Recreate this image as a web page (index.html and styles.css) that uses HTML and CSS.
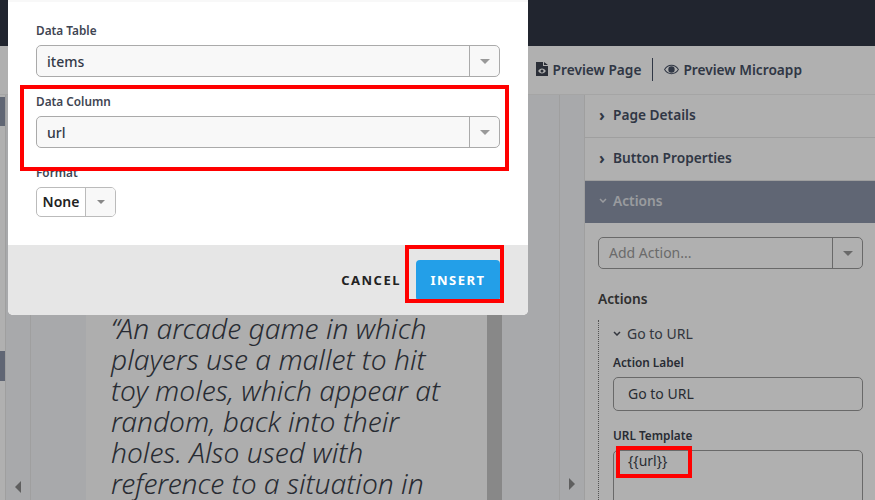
FILE: index.html
```html
<!DOCTYPE html>
<html lang="en">
<head>
  <meta charset="UTF-8">
  <title>Page Editor</title>
  <link rel="stylesheet" href="styles.css">
</head>
<body>
  <div class="app">
    <header class="topbar"></header>

    <div class="toolbar">
      <span class="toolbar-cut">m</span>
      <div class="preview-links">
        <a class="preview-link">
          <svg class="icon-file" viewBox="0 0 12 14"><path fill-rule="evenodd" d="M0 0h7v4h5v10H0zM8 0l4 3H8zM6 6.500c-1.700 0-3 1.100-3.800 2.500C3 10.400 4.300 11.500 6 11.500s3-1.100 3.800-2.500C9 7.600 7.700 6.500 6 6.500zM6 7.500a1.500 1.500 0 1 1 0 3 1.500 1.500 0 0 1 0-3z"/></svg>
          Preview Page
        </a>
        <span class="preview-sep"></span>
        <a class="preview-link">
          <svg class="icon-eye" viewBox="0 0 16 10"><path fill-rule="evenodd" d="M8 0C4.500 0 1.700 2 0 5c1.700 3 4.500 5 8 5s6.300-2 8-5c-1.700-3-4.500-5-8-5zM8 1c2.800 0 5.200 1.500 6.800 4-1.600 2.500-4 4-6.800 4S2.800 7.500 1.200 5C2.800 2.500 5.200 1 8 1zM8 1.600a3.400 3.400 0 1 0 0 6.800 3.400 3.400 0 0 0 0-6.800z"/></svg>
          Preview Microapp
        </a>
      </div>
    </div>

    <div class="workspace">
      <aside class="left-rail">
        <div class="rail-tabs">
          <span class="rail-tab"></span>
          <span class="rail-tab rail-tab-low"></span>
        </div>
        <div class="rail-strip"><span class="tri-left"></span></div>
      </aside>

      <main class="canvas">
        <div class="page-sheet">
          <p class="quote">“An arcade game in which players use a mallet to hit toy moles, which appear at random, back into their holes. Also used with reference to a situation in</p>
        </div>
        <div class="sheet-scroll"></div>
      </main>

      <div class="right-strip"><span class="tri-right"></span></div>

      <aside class="props">
        <div class="acc-row"><span class="chev">›</span>Page Details</div>
        <div class="acc-row"><span class="chev">›</span>Button Properties</div>
        <div class="acc-row acc-open"><svg class="chev-down" viewBox="0 0 8 5"><path d="M1 1l3 3 3-3"/></svg>Actions</div>

        <div class="props-body">
          <div class="add-action">
            <span class="add-text">Add Action...</span>
            <span class="add-arrow"><span class="tri-down"></span></span>
          </div>
          <h3 class="props-title">Actions</h3>
          <div class="action-item">
            <div class="action-head"><svg class="chev-down" viewBox="0 0 8 5"><path d="M1 1l3 3 3-3"/></svg>Go to URL</div>
            <label class="prop-label">Action Label</label>
            <div class="prop-input">Go to URL</div>
            <label class="prop-label">URL Template</label>
            <div class="prop-area">{{url}}</div>
          </div>
        </div>
      </aside>
    </div>
  </div>

  <div class="backdrop"></div>

  <div class="modal">
    <div class="modal-body">
      <label class="field-label">Data Table</label>
      <div class="select">
        <span class="select-value">items</span>
        <span class="select-arrow"><span class="tri-down"></span></span>
      </div>
      <label class="field-label">Data Column</label>
      <div class="select">
        <span class="select-value">url</span>
        <span class="select-arrow"><span class="tri-down"></span></span>
      </div>
      <label class="field-label">Format</label>
      <div class="mini-select">
        <span class="mini-value">None</span>
        <span class="mini-arrow"><span class="tri-down tri-small"></span></span>
      </div>
    </div>
    <div class="modal-foot">
      <button class="btn-cancel">CANCEL</button>
      <button class="btn-insert">INSERT</button>
    </div>
  </div>

  <div class="mark mark-column"></div>
  <div class="mark mark-insert"></div>
  <div class="mark mark-url"></div>
</body>
</html>
```

FILE: styles.css
```css
* {
  box-sizing: border-box;
}
html,
body {
  margin: 0;
  height: 100%;
  overflow: hidden;
}
body {
  position: relative;
  width: 875px;
  height: 500px;
  font-family: "Noto Sans", "Open Sans", sans-serif;
  color: #2f3440;
  background: #fff;
}

.app {
  display: flex;
  flex-direction: column;
  height: 500px;
}
.topbar {
  height: 46px;
  background: #303644;
}
.toolbar {
  display: flex;
  align-items: center;
  justify-content: space-between;
  height: 49px;
  padding-bottom: 2px;
  background: #fff;
  border-bottom: 1px solid #f0f0f0;
}
.toolbar-cut {
  width: 5px;
  overflow: hidden;
  margin-left: -7px;
  font-size: 14px;
  font-weight: 600;
  color: #444a58;
}
.preview-links {
  display: flex;
  align-items: center;
  margin-right: 73px;
}
.preview-link {
  display: flex;
  align-items: center;
  gap: 4px;
  font-size: 13.7px;
  font-weight: 600;
  color: #465064;
}
.preview-sep {
  width: 1px;
  height: 23px;
  margin: 0 11px 0 11px;
  background: #465064;
}
.icon-file {
  width: 12px;
  height: 14px;
  margin-right: 1px;
  fill: #3f4552;
}
.icon-eye {
  width: 15px;
  height: 11px;
  fill: #465064;
}

.workspace {
  display: flex;
  flex: 1;
  min-height: 0;
}
.left-rail {
  display: flex;
  width: 31px;
  background: #f3f5f8;
  border-right: 1px solid #e6e6e6;
}
.rail-tabs {
  display: flex;
  flex-direction: column;
  width: 6px;
  padding-top: 2px;
  background: #fff;
  border-right: 1px solid #e6e6e6;
}
.rail-tab {
  height: 29px;
  background: #8b94a8;
}
.rail-tab-low {
  margin-top: 225px;
  height: 30px;
}
.rail-strip {
  display: flex;
  flex: 1;
  align-items: flex-end;
  justify-content: center;
  padding-bottom: 7px;
}
.tri-left {
  border-style: solid;
  border-width: 6px 6px 6px 0;
  border-color: transparent #8a8a8a transparent transparent;
}
.tri-right {
  border-style: solid;
  border-width: 6px 0 6px 6px;
  border-color: transparent transparent transparent #8a8a8a;
}

.canvas {
  display: flex;
  width: 528px;
  padding-left: 55px;
  background: #f3f5f8;
  overflow: hidden;
}
.page-sheet {
  width: 401px;
  height: 405px;
  padding: 218px 30px 0 25px;
  overflow: hidden;
  background: #fcfcfc;
}
.quote {
  margin: 0;
  width: 340px;
  font-family: "Noto Sans", "Open Sans", sans-serif;
  font-size: 28.2px;
  font-weight: 300;
  font-style: italic;
  line-height: 31px;
  color: #3a3f4a;
}
.sheet-scroll {
  width: 15px;
  background: #c6c6c6;
}
.right-strip {
  display: flex;
  align-items: flex-end;
  justify-content: center;
  width: 26px;
  padding-bottom: 10px;
  background: #f3f5f8;
  border-left: 1px solid #e6e6e6;
  border-right: 1px solid #e6e6e6;
}

.props {
  flex: 1;
  background: #fff;
}
.acc-row {
  display: flex;
  align-items: center;
  height: 43px;
  padding: 0 0 3px 14px;
  font-size: 13.7px;
  font-weight: 600;
  color: #465064;
  border-bottom: 1px solid #e6e6e6;
}
.chev {
  width: 14px;
  font-size: 16px;
  font-weight: 700;
  line-height: 1;
}
.chev-down {
  width: 8px;
  height: 5px;
  margin-right: 6px;
  fill: none;
  stroke: currentColor;
  stroke-width: 1.5;
}
.acc-open {
  height: 42px;
  background: #8b94a8;
  color: #dfe1e6;
  border-bottom: 0;
}
.props-body {
  padding: 14px 12px 0 13px;
}
.add-action {
  display: flex;
  height: 32px;
  background: #fff;
  border: 1px solid #999;
  border-radius: 5px;
}
.add-text {
  flex: 1;
  padding-left: 10px;
  font-size: 14px;
  line-height: 30px;
  color: #9b9b9b;
}
.add-arrow {
  display: flex;
  align-items: center;
  justify-content: center;
  width: 30px;
  border-left: 1px solid #999;
}
.props-title {
  margin: 20px 0 0;
  font-size: 13.7px;
  font-weight: 600;
  line-height: 20px;
  color: #444;
}
.action-item {
  margin-top: 11px;
  padding-left: 14px;
  border-left: 1px dotted #777;
}
.action-head {
  display: flex;
  align-items: center;
  height: 26px;
  font-size: 14px;
  color: #4a4f5a;
}
.prop-label {
  display: block;
  margin-top: 8px;
  font-size: 11.8px;
  font-weight: 600;
  line-height: 16px;
  color: #3a3f4c;
}
.prop-input {
  height: 34px;
  margin: 7px 0 16px;
  padding-left: 14px;
  font-size: 14px;
  line-height: 32px;
  color: #3a3f4a;
  border: 1px solid #999;
  border-radius: 5px;
}
.prop-area {
  height: 70px;
  margin-top: 7px;
  padding: 0 14px;
  font-size: 14px;
  line-height: 20px;
  color: #3a3f4a;
  border: 1px solid #999;
  border-radius: 5px;
}

.backdrop {
  position: absolute;
  inset: 0;
  background: rgba(0, 0, 0, 0.31);
}
.modal {
  position: absolute;
  left: 8px;
  top: 2px;
  width: 520px;
  height: 313px;
  display: flex;
  flex-direction: column;
  overflow: hidden;
  background: #fff;
  border-radius: 0 0 5px 5px;
  box-shadow: 0 -2px 0 #f8f8f8;
}
.modal-body {
  flex: 1;
  padding: 20px 28px 0;
}
.field-label {
  display: block;
  height: 17px;
  margin-bottom: 6px;
  font-size: 11.8px;
  font-weight: 600;
  line-height: 17px;
  color: #3f4552;
}
.select {
  display: flex;
  height: 32px;
  margin-bottom: 16px;
  background: #f8f8f8;
  border: 1px solid #aaa;
  border-radius: 5px;
}
.select-value {
  flex: 1;
  padding-left: 10px;
  font-size: 14px;
  font-weight: 500;
  line-height: 31px;
  color: #333a48;
}
.select-arrow {
  display: flex;
  align-items: center;
  justify-content: center;
  width: 30px;
  border-left: 1px solid #aaa;
}
.tri-down {
  border-style: solid;
  border-width: 5px 5px 0;
  border-color: #999 transparent transparent;
}
.tri-small {
  border-width: 4px 4px 0;
  border-color: #888 transparent transparent;
}
.mini-select {
  display: flex;
  width: 80px;
  height: 30px;
  overflow: hidden;
  border: 1px solid #bbb;
  border-radius: 5px;
}
.mini-value {
  width: 49px;
  font-size: 14px;
  font-weight: 600;
  line-height: 28px;
  text-align: center;
  color: #222;
  border-right: 1px solid #bbb;
}
.mini-arrow {
  display: flex;
  flex: 1;
  align-items: center;
  justify-content: center;
  background: #f8f8f8;
}
.modal-foot {
  display: flex;
  align-items: center;
  justify-content: flex-end;
  gap: 15px;
  height: 70px;
  padding: 0 28px 0 0;
  background: #e6e6e6;
}
.btn-cancel,
.btn-insert {
  font-family: "Noto Sans", "Open Sans", sans-serif;
  font-size: 13px;
  font-weight: 700;
  letter-spacing: 1.5px;
  border: 0;
  padding: 0;
}
.btn-cancel {
  color: #222;
  background: none;
}
.btn-insert {
  width: 84px;
  height: 41px;
  color: #fff;
  background: #239fe8;
  border-radius: 4px;
}

.mark {
  position: absolute;
  border: 4px solid #f00;
}
.mark-column {
  left: 20px;
  top: 85px;
  width: 489px;
  height: 86px;
}
.mark-insert {
  left: 405px;
  top: 245px;
  width: 99px;
  height: 58px;
}
.mark-url {
  left: 616px;
  top: 446px;
  width: 76px;
  height: 32px;
}
```
